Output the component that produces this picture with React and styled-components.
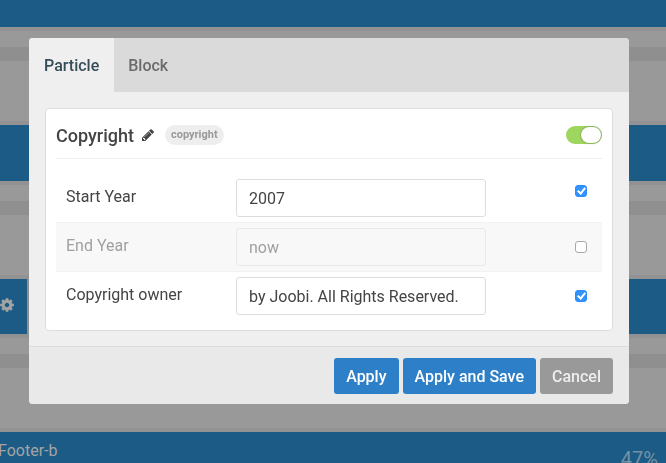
import styled, { createGlobalStyle } from "styled-components";

const fields = [
  { id: "start", label: "Start Year", value: "2007", enabled: true, lead: true },
  { id: "end", label: "End Year", value: "now", enabled: false },
  {
    id: "owner",
    label: "Copyright owner",
    value: "by Joobi. All Rights Reserved.",
    enabled: true,
  },
];

// Icons

function PencilIcon() {
  return (
    <svg width="14" height="14" viewBox="0 0 1792 1792" fill="currentColor">
      <path d="M491 1536l91-91-235-235-91 91v107h128v128h107zm523-928q0-22-22-22-10 0-17 7l-542 542q-7 7-7 17 0 22 22 22 10 0 17-7l542-542q7-7 7-17zm-54-192l416 416-832 832h-416v-416zm683 96q0 53-37 90l-166 166-416-416 166-165q36-38 90-38 53 0 91 38l235 234q37 39 37 91z" />
    </svg>
  );
}

function CogIcon() {
  return (
    <svg width="16" height="16" viewBox="0 0 1792 1792" fill="currentColor">
      <path d="M1152 896q0-106-75-181t-181-75-181 75-75 181 75 181 181 75 181-75 75-181zm512-109v222q0 12-8 23t-20 13l-185 28q-19 54-39 91 35 50 107 138 10 12 10 25t-9 23q-27 37-99 108t-94 71q-12 0-26-9l-138-108q-44 23-91 38-16 136-29 186-7 28-36 28h-222q-14 0-24.5-8.5t-11.5-21.5l-28-184q-49-16-90-37l-141 107q-10 9-25 9-14 0-25-11-126-114-165-168-7-10-7-23 0-12 8-23 15-21 51-66.5t54-70.5q-27-50-41-99l-183-27q-13-2-21-12.5t-8-23.5v-222q0-12 8-23t19-13l186-28q14-46 39-92-40-57-107-138-10-12-10-24 0-10 9-23 26-36 98.5-107.5t94.5-71.5q13 0 26 10l138 107q44-23 91-38 16-136 29-186 7-28 36-28h222q14 0 24.5 8.5t11.5 21.5l28 184q49 16 90 37l142-107q9-9 24-9 13 0 25 10 129 119 165 170 7 8 7 22 0 12-8 23-15 21-51 66.5t-54 70.5q26 50 41 98l183 28q13 2 21 12.5t8 23.5z" />
    </svg>
  );
}

// Components

function Gap() {
  return (
    <SectionGap>
      <Divider />
    </SectionGap>
  );
}

function LayoutPage() {
  return (
    <Page>
      <Block $height={27} />
      <Gap />
      <Block $height={56} />
      <Gap />
      <BlockRow>
        <NarrowBlock>
          <IconButton aria-label="Block settings">
            <CogIcon />
          </IconButton>
        </NarrowBlock>
        <WideBlock />
      </BlockRow>
      <Gap />
      <FooterBlock>
        <span>Footer-b</span>
        <Percent>
          47%
          <IconButton aria-label="Footer settings">
            <CogIcon />
          </IconButton>
        </Percent>
      </FooterBlock>
    </Page>
  );
}

function Field({ field }) {
  return (
    <Row $enabled={field.enabled}>
      <Label htmlFor={field.id} $enabled={field.enabled}>
        {field.label}
      </Label>
      <Input
        id={field.id}
        type="text"
        defaultValue={field.value}
        $enabled={field.enabled}
      />
      <CheckCell $lead={field.lead}>
        <Check
          type="checkbox"
          aria-label={`Override ${field.label}`}
          defaultChecked={field.enabled}
        />
      </CheckCell>
    </Row>
  );
}

function App() {
  return (
    <>
      <GlobalStyle />
      <LayoutPage />
      <Overlay>
        <Modal role="dialog" aria-label="Copyright">
          <Tabs role="tablist">
            <Tab role="tab" aria-selected="true" $active>
              Particle
            </Tab>
            <Tab role="tab" aria-selected="false">
              Block
            </Tab>
          </Tabs>
          <Body>
            <Card>
              <CardHeader>
                <Title>Copyright</Title>
                <EditButton aria-label="Edit title">
                  <PencilIcon />
                </EditButton>
                <Badge>copyright</Badge>
                <Toggle
                  type="checkbox"
                  role="switch"
                  aria-label="Enabled"
                  defaultChecked
                />
              </CardHeader>
              {fields.map((field) => (
                <Field key={field.id} field={field} />
              ))}
            </Card>
          </Body>
          <Footer>
            <Button>Apply</Button>
            <Button>Apply and Save</Button>
            <Button $muted>Cancel</Button>
          </Footer>
        </Modal>
      </Overlay>
    </>
  );
}

export default App;

// Style

const GlobalStyle = createGlobalStyle`
  *, *::before, *::after {
    box-sizing: border-box;
  }

  body {
    margin: 0;
    overflow: hidden;
    background: #999999;
    color: #444444;
    font-family: Roboto, "Liberation Sans", sans-serif;
    font-size: 16px;
    line-height: 24px;
  }

  button, input {
    margin: 0;
    font: inherit;
  }
`;

const Page = styled.main`
  height: 100vh;
  overflow: hidden;
  color: #a4a4a4;
`;

const Block = styled.div`
  height: ${(props) => props.$height}px;
  background: #1c5b85;
`;

const SectionGap = styled.div`
  height: 98px;
  padding-top: 16px;
  border: solid #929292;
  border-width: 4px 0;
`;

const Divider = styled.div`
  height: 14px;
  background: #8f8f8f;
`;

const BlockRow = styled.div`
  display: flex;
  gap: 2px;
  height: 55px;
  background: #8f8f8f;
`;

const NarrowBlock = styled.div`
  display: flex;
  align-items: center;
  justify-content: flex-end;
  width: 27px;
  padding: 0 12px 4px 0;
  background: #1c5b85;
`;

const WideBlock = styled.div`
  flex: 1;
  background: #1c5b85;
`;

const FooterBlock = styled.div`
  display: flex;
  justify-content: space-between;
  height: 56px;
  margin-left: -2px;
  padding-top: 7px;
  background: #1c5b85;
  white-space: nowrap;
`;

const IconButton = styled.button`
  display: flex;
  flex: none;
  padding: 0;
  border: 0;
  background: none;
  color: inherit;
`;

const Percent = styled.span`
  display: flex;
  align-items: center;
  gap: 8px;
  height: 40px;
  margin-right: -16px;
  color: #7592a5;
  font-size: 20px;
`;

const Overlay = styled.div`
  position: fixed;
  inset: 0;
  padding: 38px 37px 38px 29px;
`;

const Modal = styled.section`
  overflow: hidden;
  border-radius: 4px;
  background: #efefef;
`;

const Tabs = styled.div`
  display: flex;
  background: #dadada;
`;

const Tab = styled.button`
  height: 54px;
  padding: 2px 15px 0 14px;
  border: 0;
  background: ${(props) => (props.$active ? "#efefef" : "none")};
  color: ${(props) => (props.$active ? "#354d59" : "#6b6b6b")};
  font-weight: 500;

  &:first-child {
    padding-left: 15px;
  }
`;

const Body = styled.div`
  padding: 16px 16px 15px;
`;

const Card = styled.div`
  padding: 0 10px 9px;
  border: 1px solid #dddddd;
  border-radius: 4px;
  background: #ffffff;
`;

const CardHeader = styled.header`
  display: flex;
  align-items: center;
  height: 50px;
  margin-bottom: 15px;
  padding-top: 3px;
  border-bottom: 1px solid #eeeeee;
`;

const Title = styled.h4`
  margin: 0;
  padding-top: 2px;
  font-size: 18px;
  font-weight: 500;
`;

const EditButton = styled.button`
  display: flex;
  margin: 0 10px 0 7px;
  padding: 0;
  border: 0;
  background: none;
  color: #444444;
`;

const Badge = styled.span`
  padding: 0 6px;
  border-radius: 10px;
  background: #eeeeee;
  color: #999999;
  font-size: 11px;
  font-weight: 700;
  line-height: 20px;
`;

const Toggle = styled.input`
  appearance: none;
  display: flex;
  justify-content: flex-end;
  width: 36px;
  height: 18px;
  margin-left: auto;
  padding: 1px;
  border-radius: 9px;
  background: #9fd65f;

  &::after {
    content: "";
    width: 20px;
    height: 16px;
    border-radius: 8px;
    background: #ffffff;
    box-shadow: 0 0 2px rgba(0, 0, 0, 0.5);
  }

  &:not(:checked) {
    justify-content: flex-start;
    background: #cccccc;
  }
`;

const Row = styled.div`
  display: flex;
  margin-top: -1px;
  padding: 5px 10px;
  border: solid ${(props) => (props.$enabled ? "transparent" : "#f2f2f2")};
  border-width: 1px 0;
  background: ${(props) => (props.$enabled ? "none" : "#f8f8f8")};
`;

const Label = styled.label`
  flex: none;
  width: 170px;
  padding-top: 6px;
  color: ${(props) => (props.$enabled ? "#444444" : "#a0a0a0")};
`;

const Input = styled.input`
  width: 250px;
  height: 38px;
  padding: 0 12px;
  border: 1px solid ${(props) => (props.$enabled ? "#dddddd" : "#e9e9e9")};
  border-radius: 3px;
  background: ${(props) => (props.$enabled ? "#ffffff" : "#f8f8f8")};
  color: ${(props) => (props.$enabled ? "#444444" : "#a0a0a0")};
`;

const CheckCell = styled.div`
  display: flex;
  align-items: ${(props) => (props.$lead ? "flex-start" : "center")};
  margin-left: auto;
  padding: ${(props) => (props.$lead ? "6px 15px 0 0" : "0 15px 0 0")};
  margin-right: -10px;
`;

const Check = styled.input`
  appearance: none;
  display: grid;
  place-items: center;
  width: 12px;
  height: 12px;
  border: 1px solid #a9a9a9;
  border-radius: 3px;
  background: #ffffff;

  &:checked {
    border-color: #2c8cfb;
    background: #3393fd;
  }

  &:checked::after {
    content: "";
    width: 5px;
    height: 8px;
    margin-bottom: 2px;
    border: solid #ffffff;
    border-width: 0 2px 2px 0;
    transform: rotate(40deg);
  }
`;

const Footer = styled.footer`
  display: flex;
  justify-content: flex-end;
  gap: 4px;
  padding: 11px 16px 10px;
  border-top: 1px solid #dddddd;
  background: #e9e9e9;
`;

const Button = styled.button`
  height: 36px;
  padding: 1px 12px 0;
  border: 0;
  border-radius: 3px;
  background: ${(props) => (props.$muted ? "#999999" : "#2d7fc7")};
  color: ${(props) => (props.$muted ? "#eeeeee" : "#ffffff")};
  font-weight: 500;
  white-space: nowrap;
`;
